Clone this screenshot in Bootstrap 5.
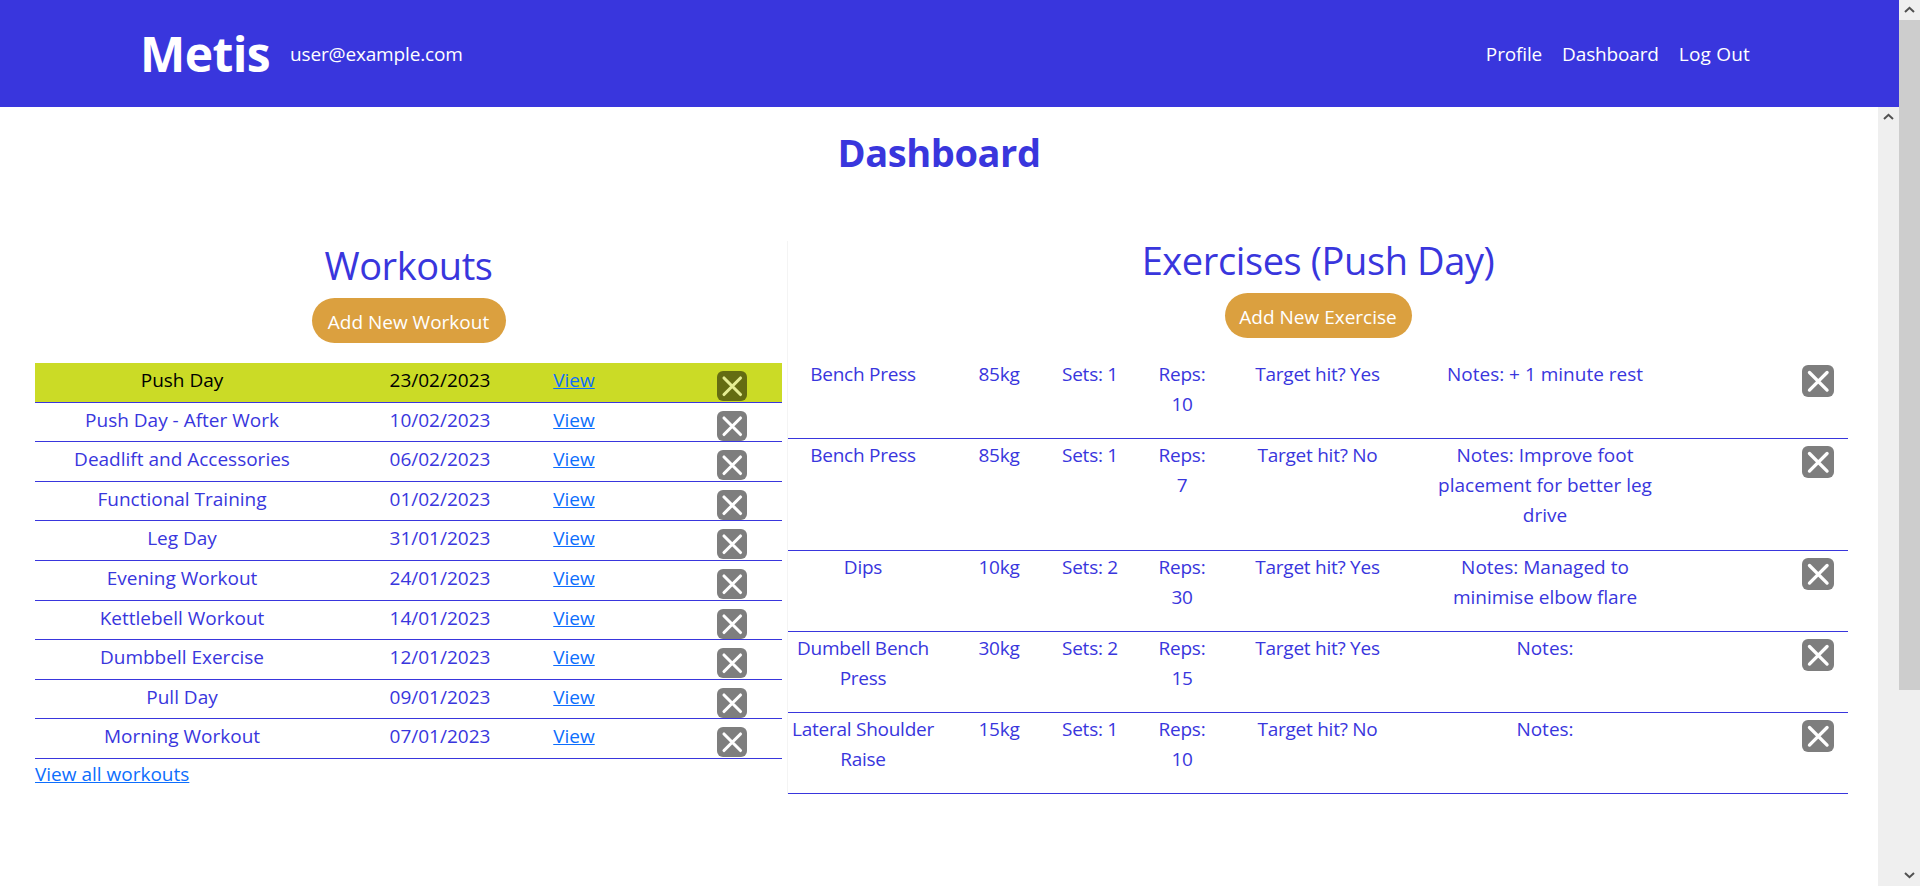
<!DOCTYPE html>
<html lang="en">
<head>
    <meta charset="UTF-8">
    <meta name="viewport" content="width=device-width, initial-scale=1.0">
    <title>Metis - Dashboard</title>
    <link href="https://cdn.jsdelivr.net/npm/bootstrap@5.3.0/dist/css/bootstrap.min.css" rel="stylesheet">
    <style>
        html, body { height: 100%; overflow: hidden; }
        body { font-family: "Open Sans", "Liberation Sans", sans-serif; font-size: 19px; line-height: 30px; color: #3936dd; }
        .site-head { height: 107px; background: #3936dd; padding: 0 149px 0 140px; flex-shrink: 0; }
        .site-brand { font-size: 48px; font-weight: 700; color: #fff; line-height: 1; letter-spacing: -.6px; }
        .site-user { font-size: 19px; color: #fff; margin-left: 20px; letter-spacing: -.15px; }
        .site-head .nav-link { color: #fff; padding: 0 0 0 20px; font-size: 19px; letter-spacing: -.15px; }
        .site-head .nav-link:last-child { letter-spacing: .2px; }
        .page-title { font-size: 38px; font-weight: 700; text-align: center; margin: 22px 0 0; line-height: 46px; color: #3936dd; letter-spacing: -.4px; }
        .panels { margin-top: 66px; padding: 0 30px 0 35px; align-items: flex-start; }
        .panel-left { width: 747px; flex-shrink: 0; padding-top: 5px; }
        .panel-right { flex: 1; margin-left: 5px; border-left: 1px solid #f4f4f4; }
        .panel-head { font-size: 38px; font-weight: 400; text-align: center; line-height: 39px; margin: 0 0 13px; color: #3936dd; letter-spacing: -.4px; }
        .add-btn { background: #dba03f; color: #fff; border: 0; border-radius: 23px; height: 45px; font-size: 19px; line-height: 42px; padding: 3px 0 0; }
        .add-btn:hover { background: #dba03f; color: #fff; }
        .add-workout { width: 194px; }
        .add-exercise { width: 187px; }
        .del-btn { background: #000; opacity: .5; border: 0; border-radius: 6px; padding: 0; display: block; flex-shrink: 0; }
        .del-btn svg { display: block; width: 100%; height: 100%; }
        .workouts { margin-top: 20px; }
        .workout-row { display: grid; grid-template-columns: 294px 222px 46px 1fr; height: 39.6px; border-bottom: 1px solid #3936dd; text-align: center; padding-top: 2px; }
        .workout-row.is-active { background: #cbdb26; color: #000; }
        .workout-row .del-btn { width: 30px; height: 30px; justify-self: end; margin: 6px 35px 0 0; }
        .workout-row a, .view-all { color: #0d6efd; }
        .exercises { margin-top: 20px; }
        .exercise-row { display: grid; grid-template-columns: 150px 122px 60px 124px 147px 308px 1fr; border-bottom: 1px solid #3936dd; text-align: center; padding: 1px 0 19.3px; letter-spacing: -.25px; }
        .exercise-row .reps { padding: 0 32px; }
        .exercise-row .notes { padding: 0 39px; letter-spacing: 0; }
        .exercise-row .del-btn { width: 32px; height: 32px; justify-self: end; margin: 6px 14px 0 0; }
        .scroll-track { width: 21px; flex-shrink: 0; background: #efefef; height: 100%; }
        .scroll-btn { height: 20px; flex-shrink: 0; }
        .scroll-btn svg { display: block; margin: 6px auto 0; }
        .scroll-thumb { height: 670px; background: #cdcdcd; }
    </style>
</head>
<body class="d-flex">
    <svg width="0" height="0" class="position-absolute">
        <symbol id="cross" viewBox="0 0 30 30">
            <path d="M7 7 23.5 23.5M23.5 7 7 23.5" stroke="#fff" stroke-width="3.1" stroke-linecap="round"/>
        </symbol>
    </svg>

    <div class="flex-grow-1 d-flex flex-column overflow-hidden">
        <!-- Header -->
        <header class="site-head d-flex align-items-center">
            <a class="site-brand text-decoration-none" href="#">Metis</a>
            <span class="site-user">user@example.com</span>
            <nav class="nav ms-auto">
                <a class="nav-link" href="#">Profile</a>
                <a class="nav-link" href="#">Dashboard</a>
                <a class="nav-link" href="#">Log Out</a>
            </nav>
        </header>

        <div class="d-flex flex-grow-1 overflow-hidden">
            <main class="flex-grow-1 overflow-hidden">
                <h1 class="page-title">Dashboard</h1>
                <div class="panels d-flex">
                    <!-- Workouts -->
                    <section class="panel-left">
                        <h2 class="panel-head">Workouts</h2>
                        <div class="text-center"><button class="btn add-btn add-workout">Add New Workout</button></div>
                        <div class="workouts">
                            <div class="workout-row is-active"><span>Push Day</span><span>23/02/2023</span><a href="#">View</a><button class="del-btn"><svg><use href="#cross"/></svg></button></div>
                            <div class="workout-row"><span>Push Day - After Work</span><span>10/02/2023</span><a href="#">View</a><button class="del-btn"><svg><use href="#cross"/></svg></button></div>
                            <div class="workout-row"><span>Deadlift and Accessories</span><span>06/02/2023</span><a href="#">View</a><button class="del-btn"><svg><use href="#cross"/></svg></button></div>
                            <div class="workout-row"><span>Functional Training</span><span>01/02/2023</span><a href="#">View</a><button class="del-btn"><svg><use href="#cross"/></svg></button></div>
                            <div class="workout-row"><span>Leg Day</span><span>31/01/2023</span><a href="#">View</a><button class="del-btn"><svg><use href="#cross"/></svg></button></div>
                            <div class="workout-row"><span>Evening Workout</span><span>24/01/2023</span><a href="#">View</a><button class="del-btn"><svg><use href="#cross"/></svg></button></div>
                            <div class="workout-row"><span>Kettlebell Workout</span><span>14/01/2023</span><a href="#">View</a><button class="del-btn"><svg><use href="#cross"/></svg></button></div>
                            <div class="workout-row"><span>Dumbbell Exercise</span><span>12/01/2023</span><a href="#">View</a><button class="del-btn"><svg><use href="#cross"/></svg></button></div>
                            <div class="workout-row"><span>Pull Day</span><span>09/01/2023</span><a href="#">View</a><button class="del-btn"><svg><use href="#cross"/></svg></button></div>
                            <div class="workout-row"><span>Morning Workout</span><span>07/01/2023</span><a href="#">View</a><button class="del-btn"><svg><use href="#cross"/></svg></button></div>
                        </div>
                        <a class="view-all" href="#">View all workouts</a>
                    </section>

                    <!-- Exercises -->
                    <section class="panel-right">
                        <h2 class="panel-head">Exercises (Push Day)</h2>
                        <div class="text-center"><button class="btn add-btn add-exercise">Add New Exercise</button></div>
                        <div class="exercises">
                            <div class="exercise-row"><span>Bench Press</span><span>85kg</span><span>Sets: 1</span><span class="reps">Reps: 10</span><span>Target hit? Yes</span><span class="notes">Notes: + 1 minute rest</span><button class="del-btn"><svg><use href="#cross"/></svg></button></div>
                            <div class="exercise-row"><span>Bench Press</span><span>85kg</span><span>Sets: 1</span><span class="reps">Reps: 7</span><span>Target hit? No</span><span class="notes">Notes: Improve foot placement for better leg drive</span><button class="del-btn"><svg><use href="#cross"/></svg></button></div>
                            <div class="exercise-row"><span>Dips</span><span>10kg</span><span>Sets: 2</span><span class="reps">Reps: 30</span><span>Target hit? Yes</span><span class="notes">Notes: Managed to minimise elbow flare</span><button class="del-btn"><svg><use href="#cross"/></svg></button></div>
                            <div class="exercise-row"><span>Dumbell Bench Press</span><span>30kg</span><span>Sets: 2</span><span class="reps">Reps: 15</span><span>Target hit? Yes</span><span class="notes">Notes:</span><button class="del-btn"><svg><use href="#cross"/></svg></button></div>
                            <div class="exercise-row"><span>Lateral Shoulder Raise</span><span>15kg</span><span>Sets: 1</span><span class="reps">Reps: 10</span><span>Target hit? No</span><span class="notes">Notes:</span><button class="del-btn"><svg><use href="#cross"/></svg></button></div>
                        </div>
                    </section>
                </div>
            </main>
            <!-- Inner scrollbar -->
            <div class="scroll-track">
                <div class="scroll-btn"><svg width="11" height="7" viewBox="0 0 11 7"><path d="M1 6 5.5 1.8 10 6" fill="none" stroke="#505050" stroke-width="2"/></svg></div>
            </div>
        </div>
    </div>

    <!-- Outer scrollbar -->
    <div class="scroll-track d-flex flex-column">
        <div class="scroll-btn"><svg width="11" height="7" viewBox="0 0 11 7"><path d="M1 6 5.5 1.8 10 6" fill="none" stroke="#505050" stroke-width="2"/></svg></div>
        <div class="scroll-thumb"></div>
        <div class="scroll-btn mt-auto"><svg width="11" height="7" viewBox="0 0 11 7"><path d="M1 1 5.5 5.2 10 1" fill="none" stroke="#505050" stroke-width="2"/></svg></div>
    </div>

    <script src="https://cdn.jsdelivr.net/npm/bootstrap@5.3.0/dist/js/bootstrap.bundle.min.js"></script>
</body>
</html>
